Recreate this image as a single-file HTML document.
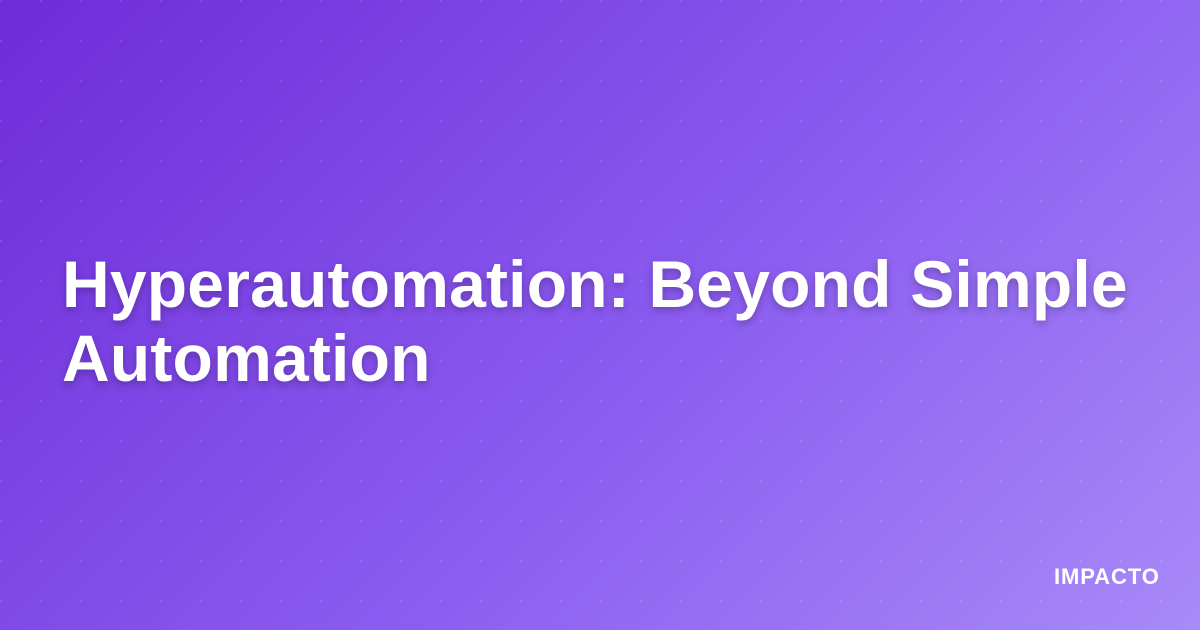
<!DOCTYPE html>
<html><head><style>
html,body{margin:0;padding:0}
body{width:1200px;height:630px;overflow:hidden;position:relative;
background:linear-gradient(135deg,#6d2bd9 0%,#8b5cf0 55%,#a88af8 100%);
font-family:"Liberation Sans",sans-serif;}
.dots{position:absolute;inset:0;background-image:radial-gradient(circle at 1px 1px,rgba(255,255,255,0.11) 1px,transparent 1.5px);background-size:40px 40px;}
h1{position:absolute;left:62px;top:247px;margin:0;width:1130px;color:#fff;font-size:66px;line-height:74px;font-weight:bold;text-shadow:0 3px 8px rgba(0,0,0,0.25);letter-spacing:0.2px;white-space:nowrap}
.brand{position:absolute;left:1054px;top:564px;color:#fff;font-weight:bold;font-size:22px;letter-spacing:0.9px}
</style></head><body>
<div class="dots"></div>
<h1>Hyperautomation: Beyond Simple<br>Automation</h1>
<div class="brand">IMPACTO</div>
</body></html>
